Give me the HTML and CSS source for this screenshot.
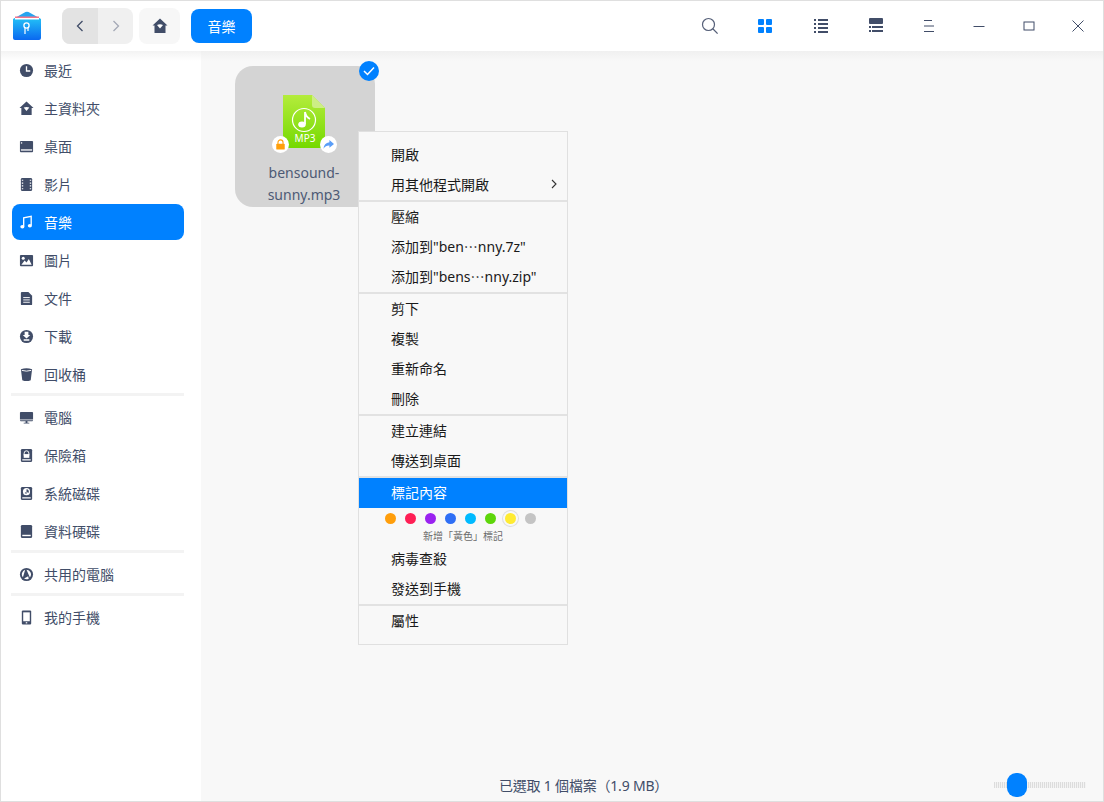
FILE: index.html
```html
<!DOCTYPE html>
<html lang="zh-Hant">
<head>
    <meta charset="UTF-8">
    <title>檔案管理器</title>
    <link rel="stylesheet" href="styles.css">
</head>
<body>
<div class="window">

    <!-- Title bar -->
    <header class="titlebar">
        <svg class="logo" width="30" height="30" viewBox="0 0 30 30">
            <defs>
                <linearGradient id="logoBody" x1="0" y1="0" x2="0" y2="1">
                    <stop offset="0" stop-color="#22bdf6"/>
                    <stop offset="1" stop-color="#0a68f0"/>
                </linearGradient>
            </defs>
            <path d="M1 8 L13.5 1 Q15 0.3 16.5 1 L29 8 Z" fill="#27a4f0"/>
            <path d="M3 5.5 H27 V8 H3 Z" fill="#f6748a"/>
            <path d="M1 8 H29 V27 Q29 29 27 29 H3 Q1 29 1 27 Z" fill="url(#logoBody)"/>
            <path d="M3 7 H27 V8.5 H3 Z" fill="#fff"/>
            <circle cx="14.5" cy="14.5" r="2.6" fill="none" stroke="#fff" stroke-width="1.3"/>
            <path d="M13 16.5 V23 M16 16.5 V20" stroke="#fff" stroke-width="1.2" fill="none"/>
        </svg>
        <div class="nav-group">
            <button class="nav-btn nav-back">
                <svg width="10" height="14" viewBox="0 0 10 14"><path d="M7.5 2 L2.5 7 L7.5 12" fill="none" stroke="#414d68" stroke-width="1.3"/></svg>
            </button>
            <button class="nav-btn">
                <svg width="10" height="14" viewBox="0 0 10 14"><path d="M2.5 2 L7.5 7 L2.5 12" fill="none" stroke="#a4a9b6" stroke-width="1.3"/></svg>
            </button>
        </div>
        <button class="home-btn">
            <svg width="16" height="16" viewBox="0 0 16 16"><path d="M8 0.5 L15.5 7.5 H13.5 V15 H2.5 V7.5 H0.5 Z" fill="#414d68"/><path d="M5 7 Q8 5.6 11 7 L8 10.6 Z" fill="#fff"/></svg>
        </button>
        <button class="crumb">音樂</button>

        <div class="tools">
            <span class="tool tool-search">
                <svg width="18" height="18" viewBox="0 0 18 18"><circle cx="7.5" cy="7.5" r="6" fill="none" stroke="#555f78" stroke-width="1.2"/><path d="M11.8 11.8 L16.6 16.6" stroke="#555f78" stroke-width="1.3"/></svg>
            </span>
            <span class="tool tool-icons">
                <svg width="16" height="16" viewBox="0 0 16 16" fill="#0081ff"><rect x="1" y="1" width="6" height="6" rx="1"/><rect x="9" y="1" width="6" height="6" rx="1"/><rect x="1" y="9" width="6" height="6" rx="1"/><rect x="9" y="9" width="6" height="6" rx="1"/></svg>
            </span>
            <span class="tool tool-list">
                <svg width="16" height="16" viewBox="0 0 16 16" fill="#414d68"><rect x="1" y="1" width="2" height="2"/><rect x="5" y="1" width="10" height="2"/><rect x="1" y="5" width="2" height="2"/><rect x="5" y="5" width="10" height="2"/><rect x="1" y="9" width="2" height="2"/><rect x="5" y="9" width="10" height="2"/><rect x="1" y="13" width="2" height="2"/><rect x="5" y="13" width="10" height="2"/></svg>
            </span>
            <span class="tool tool-tree">
                <svg width="16" height="16" viewBox="0 0 16 16" fill="#414d68"><rect x="1" y="0" width="14" height="6" rx="1"/><rect x="1" y="8" width="2" height="2"/><rect x="4" y="8" width="11" height="2"/><rect x="1" y="12" width="2" height="2"/><rect x="4" y="12" width="11" height="2"/></svg>
            </span>
            <span class="tool tool-menu">
                <svg width="12" height="14" viewBox="0 0 12 14" stroke="#414d68" fill="none"><path d="M1 1.5 H9 M1 7 H11 M1 12.5 H11"/></svg>
            </span>
            <span class="tool tool-min">
                <svg width="12" height="12" viewBox="0 0 12 12" stroke="#414d68" fill="none"><path d="M0.5 6.5 H11.5"/></svg>
            </span>
            <span class="tool tool-max">
                <svg width="12" height="12" viewBox="0 0 12 12" stroke="#414d68" fill="none"><rect x="1" y="2" width="10" height="8"/></svg>
            </span>
            <span class="tool tool-close">
                <svg width="12" height="12" viewBox="0 0 12 12" stroke="#414d68" fill="none"><path d="M0.5 0.5 L11.5 11.5 M11.5 0.5 L0.5 11.5"/></svg>
            </span>
        </div>
    </header>

    <div class="content">

        <!-- Sidebar -->
        <nav class="sidebar">
            <a class="side-item">
                <svg class="side-icon" viewBox="0 0 16 16"><circle cx="8" cy="8" r="7" fill="#414d68"/><path d="M8 3.5 V8.5 H12" fill="none" stroke="#fff" stroke-width="1.4"/></svg>
                最近
            </a>
            <a class="side-item">
                <svg class="side-icon" viewBox="0 0 16 16"><path d="M8 0.5 L15.5 7.5 H13.5 V15 H2.5 V7.5 H0.5 Z" fill="#414d68"/><path d="M5 7 Q8 5.6 11 7 L8 10.6 Z" fill="#fff"/></svg>
                主資料夾
            </a>
            <a class="side-item">
                <svg class="side-icon" viewBox="0 0 16 16"><rect x="1" y="2" width="14" height="12" rx="1" fill="#414d68"/><rect x="2" y="11" width="12" height="1.4" fill="#fff"/><rect x="2" y="3.5" width="1.4" height="1.4" fill="#fff"/></svg>
                桌面
            </a>
            <a class="side-item">
                <svg class="side-icon" viewBox="0 0 16 16"><rect x="2" y="1" width="12" height="14" rx="1.5" fill="#414d68"/><path d="M3 3.5 H4.5 M3 6.5 H4.5 M3 9.5 H4.5 M3 12.5 H4.5 M11.5 3.5 H13 M11.5 6.5 H13 M11.5 9.5 H13 M11.5 12.5 H13" stroke="#fff" stroke-width="1.2"/></svg>
                影片
            </a>
            <a class="side-item side-item-active">
                <svg class="side-icon" viewBox="0 0 16 16"><path d="M5 12 V3 L13 1.5 V11" fill="none" stroke="#fff" stroke-width="1.4"/><ellipse cx="3.6" cy="12.6" rx="2.2" ry="1.9" fill="#fff"/><ellipse cx="11.6" cy="11.4" rx="2.2" ry="1.9" fill="#fff"/></svg>
                音樂
            </a>
            <a class="side-item">
                <svg class="side-icon" viewBox="0 0 16 16"><rect x="1" y="2" width="14" height="12" rx="1" fill="#414d68"/><circle cx="4.5" cy="5.5" r="1.6" fill="#fff"/><path d="M2.5 12.5 L6 8 L8 10 L10.5 6.5 L13.5 12.5 Z" fill="#fff"/></svg>
                圖片
            </a>
            <a class="side-item">
                <svg class="side-icon" viewBox="0 0 16 16"><path d="M3 1 H10 L14 5 V14 Q14 15 13 15 H3 Q2 15 2 14 V2 Q2 1 3 1 Z" fill="#414d68"/><path d="M4.5 7 H11.5 M4.5 9.5 H11.5 M4.5 12 H11.5" stroke="#fff"/></svg>
                文件
            </a>
            <a class="side-item">
                <svg class="side-icon" viewBox="0 0 16 16"><circle cx="8" cy="8" r="7" fill="#414d68"/><path d="M6 3 H10 V6.5 H12 L8 10 L4 6.5 H6 Z M5 11 H11 V12.6 H5 Z" fill="#fff"/></svg>
                下載
            </a>
            <a class="side-item">
                <svg class="side-icon" viewBox="0 0 16 16"><path d="M2 2.5 Q8 0 14 2.5 L12.5 14 Q8 16 3.5 14 Z" fill="#414d68"/><path d="M3 3.6 Q8 5.2 13 3.6" fill="none" stroke="#fff"/></svg>
                回收桶
            </a>
            <div class="side-sep"></div>
            <a class="side-item">
                <svg class="side-icon" viewBox="0 0 16 16"><path d="M2 2 H14 Q15 2 15 3 V10 H1 V3 Q1 2 2 2 Z M1 11 H15 Q15 12 14 12 H2 Q1 12 1 11 Z M5 13.5 H11 V14.5 H5 Z M7 12 H9 V14 H7 Z" fill="#414d68"/></svg>
                電腦
            </a>
            <a class="side-item">
                <svg class="side-icon" viewBox="0 0 16 16"><rect x="2" y="1" width="12" height="14" rx="1.5" fill="#414d68"/><path d="M5.5 8 V5.5 A2.5 2.5 0 0 1 10.5 5.5 V8" fill="none" stroke="#fff"/><rect x="5" y="6.5" width="6" height="4" fill="#fff"/><rect x="3.5" y="12" width="9" height="1.3" fill="#fff"/></svg>
                保險箱
            </a>
            <a class="side-item">
                <svg class="side-icon" viewBox="0 0 16 16"><rect x="2" y="1" width="12" height="14" rx="1.5" fill="#414d68"/><circle cx="8" cy="6" r="3.8" fill="#fff"/><path d="M8 3.5 A2.5 2.5 0 0 1 10 7.5 L8 6 Z M6 7.5 L8 6 L8 8.5 Z" fill="#414d68"/><rect x="3.5" y="12" width="9" height="1.3" fill="#fff"/></svg>
                系統磁碟
            </a>
            <a class="side-item">
                <svg class="side-icon" viewBox="0 0 16 16"><rect x="2" y="1" width="12" height="14" rx="1.5" fill="#414d68"/><rect x="3.5" y="11.5" width="9" height="1.5" fill="#fff"/></svg>
                資料硬碟
            </a>
            <div class="side-sep"></div>
            <a class="side-item">
                <svg class="side-icon" viewBox="0 0 16 16"><circle cx="8" cy="8" r="7" fill="#414d68"/><path d="M6.6 3 A5 5 0 0 0 4.2 11 Z M8 3 L11.6 11.2 A5 5 0 0 0 8 3 Z M5.4 12.2 L9.8 9.8 L10.4 12.4 A5 5 0 0 1 5.4 12.2 Z" fill="#fff"/></svg>
                共用的電腦
            </a>
            <div class="side-sep"></div>
            <a class="side-item">
                <svg class="side-icon" viewBox="0 0 16 16"><rect x="3" y="0.5" width="10" height="15" rx="1.2" fill="#414d68"/><rect x="4.5" y="2.5" width="7" height="9.5" fill="#fff"/><rect x="7.2" y="13" width="1.6" height="1.3" fill="#fff"/></svg>
                我的手機
            </a>
        </nav>

        <!-- File area -->
        <main class="main">
            <div class="files">
                <div class="file-tile">
                    <div class="file-icon">
                        <svg width="72" height="72" viewBox="0 0 72 72">
                            <defs>
                                <linearGradient id="mp3Body" x1="0" y1="0" x2="0" y2="1">
                                    <stop offset="0" stop-color="#b4ec3c"/>
                                    <stop offset="1" stop-color="#74d900"/>
                                </linearGradient>
                            </defs>
                            <path d="M14 1 H43 L56 14 V53 Q56 54 55 54 H15 Q14 54 14 53 Z" fill="url(#mp3Body)"/>
                            <path d="M43 1 L56 14 H46 Q43 14 43 11 Z" fill="#cdee84"/>
                            <circle cx="35" cy="26" r="11.5" fill="none" stroke="#fff" stroke-width="1.2"/>
                            <path d="M36 18 V30 M36 18 Q37 23 41 25" fill="none" stroke="#fff" stroke-width="1.8"/>
                            <ellipse cx="33" cy="30.5" rx="3.8" ry="3" fill="#fff"/>
                        </svg>
                        <span class="mp3-label">MP3</span>
                        <span class="emblem emblem-lock">
                            <svg width="12" height="13" viewBox="0 0 12 13"><path d="M3 6 V4 A3 3 0 0 1 9 4 V6" fill="none" stroke="#ff9f0a" stroke-width="1.3"/><rect x="1" y="5.5" width="10" height="7" rx="1" fill="#ff9f0a"/></svg>
                        </span>
                        <span class="emblem emblem-share">
                            <svg width="12" height="11" viewBox="0 0 12 11"><path d="M7 0.5 L12 5 L7 9 V6.5 Q3 6.3 0.5 10 Q1 4 7 3 Z" fill="#5a9ef8"/></svg>
                        </span>
                    </div>
                    <div class="file-name">bensound-<br>sunny.mp3</div>
                    <span class="check">
                        <svg width="12" height="10" viewBox="0 0 12 10"><path d="M1 5 L4.5 8.5 L11 1.5" fill="none" stroke="#fff" stroke-width="1.5"/></svg>
                    </span>
                </div>
            </div>

            <footer class="statusbar">
                <span class="status-text">已選取 1 個檔案（1.9 MB）</span>
                <div class="slider"><span class="slider-thumb"></span></div>
            </footer>
        </main>
    </div>

    <!-- Context menu -->
    <div class="menu">
        <div class="menu-item">開啟</div>
        <div class="menu-item menu-more">用其他程式開啟
            <svg width="6" height="10" viewBox="0 0 6 10"><path d="M1 1 L5 5 L1 9" fill="none" stroke="#333" stroke-width="1.1"/></svg>
        </div>
        <div class="menu-sep"></div>
        <div class="menu-item">壓縮</div>
        <div class="menu-item">添加到"ben⋯nny.7z"</div>
        <div class="menu-item">添加到"bens⋯nny.zip"</div>
        <div class="menu-sep"></div>
        <div class="menu-item">剪下</div>
        <div class="menu-item">複製</div>
        <div class="menu-item">重新命名</div>
        <div class="menu-item">刪除</div>
        <div class="menu-sep"></div>
        <div class="menu-item">建立連結</div>
        <div class="menu-item">傳送到桌面</div>
        <div class="menu-sep"></div>
        <div class="menu-item menu-item-active">標記內容</div>
        <div class="tag-row">
            <span class="tag tag-orange"></span>
            <span class="tag tag-red"></span>
            <span class="tag tag-purple"></span>
            <span class="tag tag-blue"></span>
            <span class="tag tag-sky"></span>
            <span class="tag tag-green"></span>
            <span class="tag tag-yellow"></span>
            <span class="tag tag-gray"></span>
        </div>
        <div class="tag-label">新增「黃色」標記</div>
        <div class="menu-item">病毒查殺</div>
        <div class="menu-item">發送到手機</div>
        <div class="menu-sep"></div>
        <div class="menu-item">屬性</div>
    </div>
</div>
</body>
</html>
```
FILE: styles.css
```css
* {
    box-sizing: border-box;
}

body {
    margin: 0;
    font-family: "Noto Sans", "Noto Sans CJK TC", sans-serif;
    color: #414d68;
    background: #fff;
}

.window {
    position: relative;
    width: 1104px;
    height: 802px;
    border: 1px solid #dfdfdf;
    display: flex;
    flex-direction: column;
    overflow: hidden;
}

/* Title bar */
.titlebar {
    height: 50px;
    flex-shrink: 0;
    background: #fff;
    display: flex;
    align-items: center;
    padding-left: 11px;
}

.logo {
    margin-right: 20px;
    flex-shrink: 0;
}

button {
    border: none;
    padding: 0;
    font-family: inherit;
    display: flex;
    align-items: center;
    justify-content: center;
}

.nav-group {
    display: flex;
    width: 71px;
    height: 36px;
    border-radius: 8px;
    overflow: hidden;
    background: #f0f0f0;
}

.nav-btn {
    width: 35px;
    background: transparent;
}

.nav-back {
    width: 36px;
    background: #e3e3e3;
}

.home-btn {
    width: 41px;
    height: 36px;
    margin-left: 6px;
    border-radius: 8px;
    background: #f7f7f7;
}

.crumb {
    width: 61px;
    height: 34px;
    margin-left: 11px;
    border-radius: 8px;
    background: #0081ff;
    color: #fff;
    font-size: 14px;
}

.tools {
    margin-left: auto;
    display: flex;
    align-items: center;
    height: 100%;
}

.tool {
    display: flex;
    align-items: center;
    justify-content: center;
    width: 50px;
    height: 50px;
}

.tool-search { margin-right: 5px; }
.tool-icons { margin-right: 6px; }
.tool-list { margin-right: 5px; }
.tool-tree { margin-right: 3px; }
.tool-max { margin-right: -1px; }

/* Body */
.content {
    flex: 1;
    display: flex;
    min-height: 0;
}

.sidebar {
    width: 200px;
    flex-shrink: 0;
    background: linear-gradient(#f3f3f3, #fff 10px);
    padding: 1px 17px 0 11px;
    display: flex;
    flex-direction: column;
    gap: 2px;
}

.side-item {
    display: flex;
    align-items: center;
    height: 36px;
    padding-left: 7px;
    border-radius: 8px;
    font-size: 14px;
    color: #414d68;
    flex-shrink: 0;
}

.side-icon {
    width: 15px;
    height: 15px;
    margin-right: 10px;
    flex-shrink: 0;
}

.side-item-active {
    background: #0081ff;
    color: #fff;
}

.side-sep {
    height: 3px;
    margin: -1px 0 1px -1px;
    background: #f3f3f3;
    flex-shrink: 0;
}

.main {
    flex: 1;
    display: flex;
    flex-direction: column;
    background: linear-gradient(#f0f0f0, #f8f8f8 10px);
}

.files {
    flex: 1;
    padding: 15px 0 0 34px;
}

.file-tile {
    position: relative;
    width: 140px;
    height: 141px;
    border-radius: 18px;
    background: #d4d4d4;
    display: flex;
    flex-direction: column;
    align-items: center;
    padding-top: 28px;
}

.file-icon {
    position: relative;
    width: 72px;
    height: 54px;
}

.file-icon svg {
    display: block;
}

.mp3-label {
    position: absolute;
    left: 0;
    right: 0;
    top: 38px;
    text-align: center;
    font-size: 10px;
    line-height: 12px;
    color: #fff;
}

.emblem {
    position: absolute;
    top: 42px;
    width: 17px;
    height: 17px;
    border-radius: 50%;
    background: #fff;
    display: flex;
    align-items: center;
    justify-content: center;
}

.emblem svg {
    width: 11px;
    height: 11px;
}

.emblem-lock { left: 3px; }
.emblem-share { left: 51px; }

.file-name {
    margin-top: 14px;
    width: 100%;
    padding-right: 2px;
    text-align: center;
    font-size: 14px;
    line-height: 22px;
    color: #4d5a75;
}

.check {
    position: absolute;
    top: -5px;
    right: -4px;
    width: 20px;
    height: 20px;
    border-radius: 50%;
    background: #0081ff;
    display: flex;
    align-items: center;
    justify-content: center;
}

.statusbar {
    height: 32px;
    flex-shrink: 0;
    display: flex;
    align-items: center;
    padding-left: 298px;
}

.status-text {
    font-size: 14px;
    letter-spacing: -0.2px;
    color: #414d68;
}

.slider {
    position: relative;
    width: 92px;
    height: 6px;
    margin-left: 326px;
    background: repeating-linear-gradient(90deg, #dcdcdc 0 1px, #f3f3f3 1px 2px);
}

.slider-thumb {
    position: absolute;
    left: 13px;
    top: -9px;
    width: 20px;
    height: 24px;
    border-radius: 9px;
    background: #0081ff;
}

/* Context menu */
.menu {
    position: absolute;
    left: 357px;
    top: 130px;
    width: 210px;
    height: 514px;
    padding-top: 8px;
    background: #f8f8f8;
    border: 1px solid #e0e0e0;
    font-size: 14px;
    color: #1a1a1a;
}

.menu-item {
    height: 30px;
    padding: 0 10px 2px 32px;
    display: flex;
    align-items: center;
    justify-content: space-between;
}

.menu-item-active {
    background: #0081ff;
    color: #fff;
}

.menu-sep {
    height: 2px;
    background: #e2e2e2;
}

.tag-row {
    display: flex;
    height: 20px;
    align-items: center;
    padding-left: 26px;
    gap: 9px;
}

.tag {
    width: 11px;
    height: 11px;
    border-radius: 50%;
}

.tag-orange { background: #ff9e0b; }
.tag-red { background: #ff1f55; }
.tag-purple { background: #9a22f0; }
.tag-blue { background: #2f6ff5; }
.tag-sky { background: #00baff; }
.tag-green { background: #5ed60a; }
.tag-yellow { background: #ffeb33; box-shadow: 0 0 0 2px #f8f8f8, 0 0 0 3px #dedede; }
.tag-gray { background: #c4c4c4; }

.tag-label {
    height: 16px;
    font-size: 10px;
    line-height: 16px;
    text-align: center;
    color: #6a6a6a;
}
```
